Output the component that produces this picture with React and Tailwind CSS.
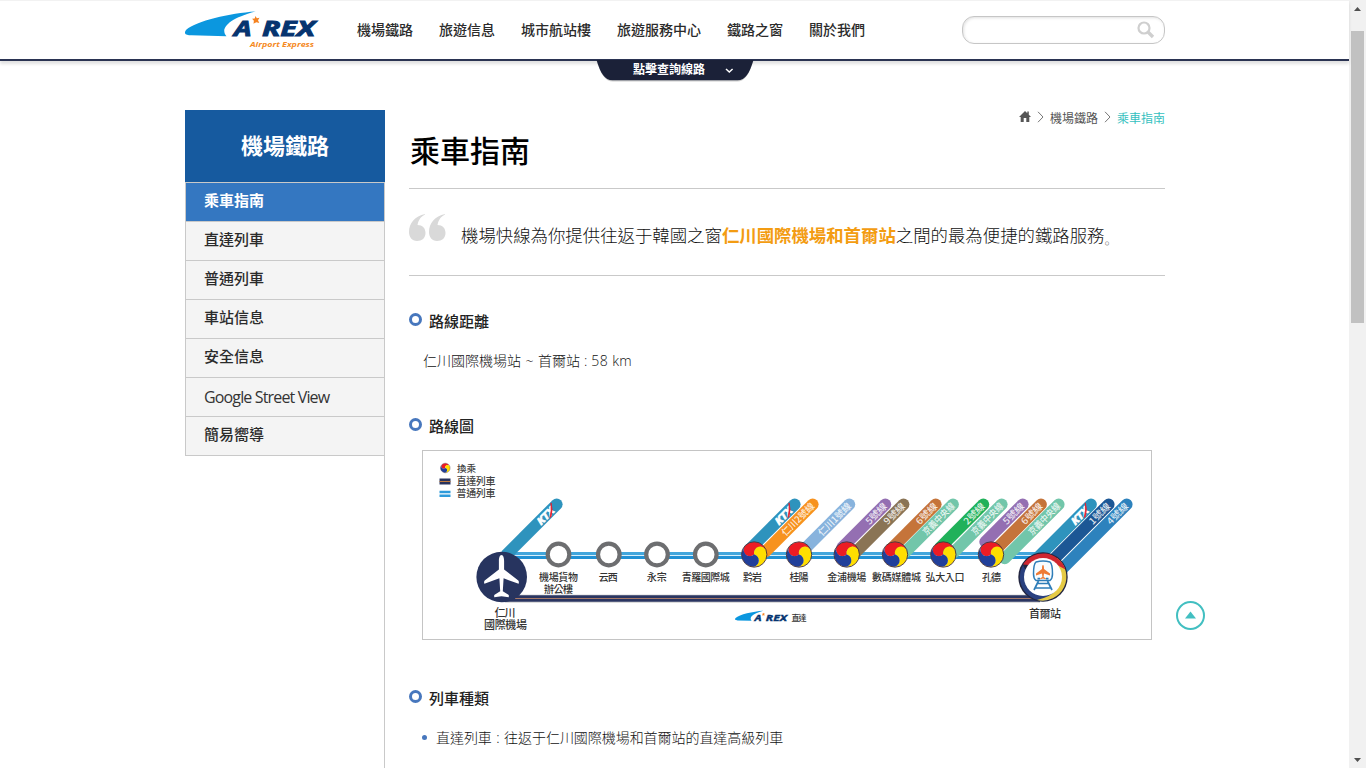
import React from "react";

const NAV = [
  { label: "機場鐵路" },
  { label: "旅遊信息" },
  { label: "城市航站樓" },
  { label: "旅遊服務中心" },
  { label: "鐵路之窗" },
  { label: "關於我們" },
];

const MENU = ["乘車指南", "直達列車", "普通列車", "車站信息", "安全信息", "Google Street View", "簡易嚮導"];

const FONT = "font-['Noto_Sans_CJK_TC','Noto_Sans',sans-serif]";

function ArexMark({ x = 0, y = 0, scale = 1 }) {
  return (
    <g transform={`translate(${x} ${y}) scale(${scale})`}>
      <path d="M70.500 .4C45 2 11 10 1.500 18.500c-3.500 4-1 5.500 5 5.700L41.500 25.200C35 18 42 8 70.500 .4Z" fill="#0b97df" />
      <text x="49" y="25" fontSize="21" fontWeight="700" fontStyle="italic" fill="#06346f" stroke="#06346f" strokeWidth=".9" textLength="17.500" lengthAdjust="spacingAndGlyphs" fontFamily="Open Sans">A</text>
      <text x="77" y="25" fontSize="21" fontWeight="700" fontStyle="italic" fill="#06346f" stroke="#06346f" strokeWidth=".9" textLength="53" lengthAdjust="spacingAndGlyphs" fontFamily="Open Sans">REX</text>
      <path d="m70.500 5 1.300 2.300 2.700-.5-1.500 2.400 1.300 2.800-3-.8-2.800 1.600.4-3-1.800-2 2.600-.4Z" fill="#f58220" />
    </g>
  );
}

function Logo() {
  return (
    <svg width="134" height="38" viewBox="0 0 134 38" className="block">
      <ArexMark />
      <text x="65" y="35.500" fontSize="7.800" fontWeight="700" fontStyle="italic" fill="#f58a1f" textLength="64" lengthAdjust="spacingAndGlyphs" fontFamily="Open Sans">Airport Express</text>
    </svg>
  );
}

function Header() {
  return (
    <header className="relative z-10 h-[61px] border-t border-b-2 border-t-[#f2f2f2] border-b-[#2a3352] bg-white shadow-[0_3px_3px_rgba(0,0,0,0.12)]">
      <div className="ml-[185px] flex h-[58px] w-[980px]">
        <div className="w-[172px] pt-[10px]">
          <Logo />
        </div>
        <nav className="flex gap-[26px] pt-[18px] text-[14px] leading-[21px] font-medium text-[#2b2b2b]">
          {NAV.map((n) => (
            <a key={n.label} className="whitespace-nowrap">{n.label}</a>
          ))}
        </nav>
        <div className="mt-[15px] ml-auto flex h-[28px] w-[203px] items-center justify-end rounded-[12px] border border-[#c6c6c6] pr-[9px] shadow-[inset_1px_1px_3px_rgba(0,0,0,0.12)]">
          <svg width="18" height="18" viewBox="0 0 18 18" fill="none" stroke="#cfcfcf">
            <circle cx="7" cy="7" r="5.500" strokeWidth="2.200" />
            <path d="m11 11 5 5" strokeWidth="3.400" />
          </svg>
        </div>
      </div>
      <div className="absolute top-[58px] left-[596px] h-[23px] w-[158px]">
        <svg width="158" height="23" className="absolute inset-0">
          <path d="M1 3c4 12 8 19.500 16 19.500h124c8 0 12-7.500 16-19.500Z" fill="#999" opacity=".5" />
          <path d="M.5 1c4 13 8 20.300 16 20.300h125c8 0 12-7.300 16-20.300Z" fill="#1b2138" />
          <path d="m130 10 3.300 3 3.300-3" fill="none" stroke="#fff" strokeWidth="1.500" />
        </svg>
        <span className="relative block pl-[37px] text-[12px] leading-[19px] font-bold text-white">點擊查詢線路</span>
      </div>
    </header>
  );
}

function Sidebar() {
  return (
    <aside className="flex h-[658px] w-[200px] shrink-0 flex-col">
      <h2 className="flex h-[72px] items-center justify-center bg-[#165a9f] pb-[3px] text-[22px] font-bold text-white">機場鐵路</h2>
      <ul className="flex-1 border-r border-[#c9c9c9]">
        {MENU.map((m, i) => (
          <li
            key={m}
            className={
              i === 0
                ? "h-[39px] border-t border-l border-[#c9c9c9] bg-[#3477c1] pl-[18px] text-[15px] leading-[34px] font-bold text-white"
                : i === 5
                  ? "h-[39px] border-t border-l border-[#c9c9c9] bg-[#f4f4f4] pl-[18px] font-['Open_Sans',sans-serif] text-[16px] leading-[39px] tracking-[-0.85px] text-[#333]"
                  : "h-[39px] border-t border-l border-[#c9c9c9] bg-[#f4f4f4] pl-[18px] text-[15px] leading-[33px] font-medium text-[#2b2b2b]"
            }
          >
            {m}
          </li>
        ))}
        <li className="h-px bg-[#c9c9c9]" />
      </ul>
    </aside>
  );
}

function Chevron() {
  return (
    <svg width="7" height="12" viewBox="0 0 7 12" fill="none" stroke="#777" className="-mt-[3px]">
      <path d="m1 .8 5 5.200-5 5.200" />
    </svg>
  );
}

function Heading({ children }) {
  return (
    <h3 className="flex h-[22px] items-center gap-[7px] text-[15px] font-medium text-[#222]">
      <span className="-mt-[4px] h-[13px] w-[13px] rounded-full border-[3px] border-[#4777bd]" />
      {children}
    </h3>
  );
}

const R = 12.5;
const at = (deg, r) => `${(r * Math.cos((deg * Math.PI) / 180)).toFixed(2)} ${(r * Math.sin((deg * Math.PI) / 180)).toFixed(2)}`;
const SWIRL = `M0 0A${R / 2} ${R / 2} 0 0 1 ${at(225, R)}A${R} ${R} 0 0 1 ${at(345, R)}A${R / 2} ${R / 2} 0 0 0 0 0Z`;

function Transfer({ x, y, scale = 1 }) {
  return (
    <g transform={`translate(${x} ${y}) scale(${scale})`}>
      <path d={SWIRL} fill="#ec1c24" />
      <path d={SWIRL} fill="#ffde00" transform="rotate(120)" />
      <path d={SWIRL} fill="#213f9a" transform="rotate(240)" />
      <circle r={R + 0.2} fill="none" stroke="#473238" strokeWidth=".9" />
    </g>
  );
}

const BRANCHES = [
  [556.7, 50, "#2e93bd", "KTX"],
  [794.7, 45, "#2e93bd", "KTX"],
  [812.7, 47, "#f7921e", "仁川2號線", 42],
  [849.3, 48, "#88b3dd", "仁川1號線", 42],
  [885.3, 43, "#946fb2", "5號線", 26],
  [903.5, 47, "#8a7455", "9號線", 26],
  [935.7, 44, "#c5743a", "6號線", 26],
  [953, 48, "#72c6aa", "京義中央線", 41],
  [983.3, 43, "#21b15a", "2號線", 26],
  [1001.7, 48, "#72c6aa", "京義中央線", 41],
  [1022.7, 37.5, "#946fb2", "5號線", 26],
  [1041, 44, "#c5743a", "6號線", 26],
  [1058.7, 54, "#72c6aa", "京義中央線", 41],
  [1091, 55, "#2e93bd", "KTX"],
  [1108.7, 58, "#1c5795", "1號線", 26],
  [1126.7, 66, "#2d82bd", "4號線", 26],
];

function Branch({ x, len, color, label, width }) {
  const y = 504.3;
  return (
    <g>
      <path d={`M${x} ${y}l${-len} ${len}`} stroke={color} strokeWidth="11.800" strokeLinecap="round" />
      <g transform={`translate(${x} ${y}) rotate(-45)`}>
        {label === "KTX" ? (
          <>
            <text x="-26" y="3.800" fontSize="10" fontWeight="700" fontStyle="italic" fill="#fff" stroke="#fff" strokeWidth=".7" fontFamily="Open Sans" textLength="20" lengthAdjust="spacingAndGlyphs">KTX</text>
            <path d="M-14 4.500Q-8 1-3-5-6 1-13 4.800Z" fill="#e31f2f" stroke="#e31f2f" strokeWidth=".8" />
          </>
        ) : (
          <text x="0" y="3.500" textAnchor="end" fontSize="9.300" fontWeight="500" fill="#fff" fillOpacity=".85" textLength={width} lengthAdjust="spacingAndGlyphs">{label}</text>
        )}
      </g>
    </g>
  );
}

const LABELS = [
  [558.5, 580.5, "機場貨物", 39],
  [558.5, 592.5, "辦公樓", 29],
  [608.3, 580.5, "云西", 19],
  [656.8, 580.5, "永宗", 20],
  [705.8, 580.5, "青羅國際城", 48],
  [752.5, 580.5, "黔岩", 19],
  [799, 580.5, "桂陽", 19],
  [846.8, 580.5, "金浦機場", 39],
  [896.5, 580.5, "數碼媒體城", 49],
  [945, 580.5, "弘大入口", 39],
  [991.5, 580.5, "孔德", 19],
];

function RouteMap() {
  return (
    <svg width="728" height="188" viewBox="423 451 728 188" className="block" fill="none">
      <g fill="#444" fontWeight="500">
        <Transfer x={445.3} y={468} scale={0.38} />
        <path d="M439.500 478.500h11v6h-11Z" fill="#27325c" />
        <path d="M439.500 481.500h11" stroke="#c07a3c" strokeWidth="1" />
        <path d="M439.500 492h11M439.500 495.700h11" stroke="#2d9bdb" strokeWidth="2.400" />
        <text x="457" y="471.500" fontSize="9.500" textLength="19">換乘</text>
        <text x="456.500" y="485.300" fontSize="10" textLength="39">直達列車</text>
        <text x="456.500" y="496.500" fontSize="10" textLength="39">普通列車</text>
      </g>

      <path d="M505 553.600h530" stroke="#42a6dc" strokeWidth="3" />
      <path d="M505 555.500h530" stroke="#d6effc" strokeWidth="1" />
      <path d="M505 557.400h530" stroke="#2191d4" strokeWidth="3" />

      {BRANCHES.map(([x, len, color, label, width]) => (
        <Branch key={x} x={x} len={len} color={color} label={label} width={width} />
      ))}

      <path d="M505 598.700h535" stroke="#dcdcdc" strokeWidth="8.500" />
      <path d="M505 598.500h535" stroke="#2a3561" strokeWidth="6.400" />
      <path d="M515 598.500h520" stroke="#a77a68" strokeWidth="1" />

      {[558.5, 608.8, 657, 705.8].map((x) => (
        <circle key={x} cx={x} cy="554.500" r="10.800" fill="#fff" stroke="#6d6e70" strokeWidth="4.200" />
      ))}
      {[754.2, 799, 846.7, 895, 943.3, 991].map((x) => (
        <Transfer key={x} x={x} y={554.5} />
      ))}

      <circle cx="501.700" cy="577" r="25.300" fill="#27345f" />
      <path d="M501.500 555c1.800 0 2.600 3 2.600 6v8.500l14.200 11c.8.700.6 2.600.3 3.300l-15-5.500-.8 13 6 3.600v2.300l-7.300-1-7.300 1v-2.300l6-3.600-.8-13-15 5.500c-.4-.8-.5-2.600.3-3.300l14.200-11V561c0-3 .8-6 2.600-6Z" fill="#fff" />

      <g transform="translate(1043 577)">
        <circle r="24.700" fill="#22253f" />
        <path d="M-20-12A23.700 23.700 0 0 0 4 23.400L12 16-18-8Z" fill="#29407f" />
        <path d="M14-19A23.700 23.700 0 0 1-6 22.900Q8 20 14 12Z" fill="#e5ca45" />
        <path d="M-20-12.500A23.700 23.700 0 0 1 22.500-7.500L14-12H-14Z" fill="#cf2730" />
        <circle r="19" fill="#fff" />
        <path d="M-7-15Q0-17 7-15 9.500-13 9.500-3 9.500 1.500 7 3.500H-7Q-9.500 1.500-9.500-3-9.500-13-7-15Z" stroke="#2f7db8" strokeWidth="1.500" fill="#f8fcff" />
        <path d="M-5.500 1.700h2.500M3 1.700h2.500M-4.500 4-9 13M4.500 4 9 13M-5.500 6.500H5.500M-7.500 11H7.500" stroke="#2f7db8" strokeWidth="1.700" />
        <path d="M0-12c.8 0 1 1.500 1 4l6 4.500v2l-6-2-.4 3.500L2.800 1.200v1L0 1.500-2.800 2.200v-1L-.6 0-1-3.500l-6 2v-2L-1-8c0-2.500.2-4 1-4Z" fill="#ee7a35" />
      </g>

      <g fill="#333" fontWeight="500" textAnchor="middle">
        {LABELS.map(([x, y, t, w]) => (
          <text key={t} x={x} y={y} fontSize="10" textLength={w}>{t}</text>
        ))}
        <text x="505" y="617" fontSize="11" textLength="21">仁川</text>
        <text x="505.500" y="629" fontSize="11" textLength="43">國際機場</text>
        <text x="1045" y="617.500" fontSize="11" textLength="32">首爾站</text>
        <text x="799" y="620.500" fontSize="8" textLength="15">直達</text>
      </g>
      <ArexMark x={735} y={610.7} scale={0.4} />
    </svg>
  );
}

function Content() {
  return (
    <main className="ml-[24px] w-[756px] shrink-0">
      <div className="flex h-[16px] items-center justify-end text-[12px] text-[#555]">
        <svg width="12" height="11" viewBox="0 0 12 11" fill="#555" className="-mt-[4px] mr-[6px]">
          <path d="M6 0 0 6h1.700v5h3V7h2.600v4h3V6H12l-2.200-2.200V.5H8.300v1.800Z" />
        </svg>
        <Chevron />
        <span className="mr-[6px] ml-[6px]">機場鐵路</span>
        <Chevron />
        <span className="ml-[6px] text-[#35bfc0]">乘車指南</span>
      </div>
      <h1 className="h-[62px] pl-[1px] text-[30px] leading-[46px] font-medium text-black">乘車指南</h1>
      <div className="flex h-[88px] border-y border-[#c9c9c9]">
        <svg width="37" height="27" viewBox="0 0 37 27" fill="#d9d9d9" className="mt-[25px] shrink-0">
          <path d="M16 0C6 2 0 9 0 18c0 5 3 9 8 9s8.500-3 8.500-8-3-8-8-8c1-5 3-8 7.500-10.500Z" />
          <path transform="translate(20)" d="M16 0C6 2 0 9 0 18c0 5 3 9 8 9s8.500-3 8.500-8-3-8-8-8c1-5 3-8 7.500-10.500Z" />
        </svg>
        <p className="pl-[15px] text-[17.4px] leading-[91px] font-light whitespace-nowrap text-[#111]">
          機場快線為你提供往返于韓國之窗<b className="font-bold text-[#f39c12]">仁川國際機場和首爾站</b>之間的最為便捷的鐵路服務<span className="inline-block translate-y-[2px] font-['Noto_Sans_CJK_JP',sans-serif] text-[13px] leading-none text-[#888]">。</span>
        </p>
      </div>
      <div className="pt-[34px]">
        <Heading>路線距離</Heading>
        <p className="h-[40px] pt-[17px] pl-[14px] text-[14px] leading-[22px] font-light whitespace-nowrap text-[#111]">
          仁川國際機場站<span className="px-[4.5px] font-['Open_Sans',sans-serif]">~</span>首爾站<span className="px-[4px] font-['Open_Sans',sans-serif]">:</span><span className="font-['Open_Sans',sans-serif] tracking-[0.4px]">58 km</span>
        </p>
      </div>
      <div className="pt-[43px]">
        <Heading>路線圖</Heading>
        <div className="mt-[13px] ml-[13px] h-[190px] w-[730px] border border-[#c4c4c4]">
          <RouteMap />
        </div>
      </div>
      <div className="pt-[47px]">
        <Heading>列車種類</Heading>
        <ul className="pt-[17px] pl-[13px]">
          <li className="flex h-[22px] items-center gap-[9px] text-[14px] font-light whitespace-nowrap text-[#111]">
            <span className="h-[5px] w-[5px] rounded-full bg-[#4777bd]" />
            <span className="tracking-[-0.05px]">直達列車<span className="px-[4.5px] font-['Open_Sans',sans-serif]">:</span>往返于仁川國際機場和首爾站的直達高級列車</span>
          </li>
        </ul>
      </div>
    </main>
  );
}

function Scrollbar() {
  return (
    <div className="flex h-[768px] w-[17px] flex-col items-center bg-[#f1f1f1]">
      <svg width="17" height="17" viewBox="0 0 17 17" fill="#505050"><path d="m8.500 7 3.500 4H5Z" /></svg>
      <div className="mt-[14px] h-[292px] w-[13px] bg-[#c1c1c1]" />
      <svg width="17" height="17" viewBox="0 0 17 17" fill="#505050" className="mt-auto"><path d="m8.500 11 3.500-4H5Z" /></svg>
    </div>
  );
}

export default function App() {
  return (
    <div className={`flex h-[768px] w-[1366px] overflow-hidden bg-white ${FONT}`}>
      <div className="relative w-[1349px]">
        <Header />
        <div className="ml-[185px] flex pt-[49px]">
          <Sidebar />
          <Content />
        </div>
        <button className="absolute top-[601px] left-[1176px]">
          <svg width="29" height="29" viewBox="0 0 29 29" className="block">
            <circle cx="14.500" cy="14.500" r="13.500" fill="#fff" stroke="#42bfc1" strokeWidth="2" />
            <path d="m14.500 10.500 5.500 7H9Z" fill="#42bfc1" />
          </svg>
        </button>
      </div>
      <Scrollbar />
    </div>
  );
}
